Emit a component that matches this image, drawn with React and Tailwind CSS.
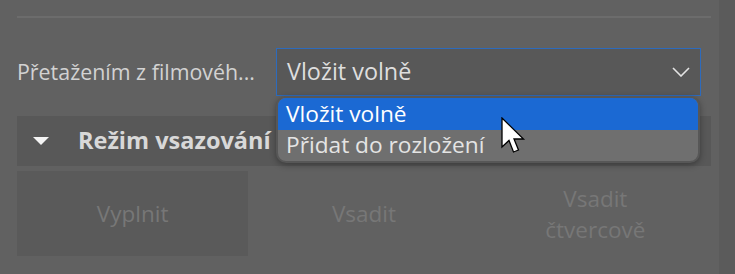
import React from 'react';

const font = { fontFamily: '"Open Sans", "Noto Sans", sans-serif' };

function Chevron() {
  return (
    <svg width="18" height="10" viewBox="0 0 18 10" fill="none">
      <path d="M1 1 L9 9 L17 1" stroke="#e4e4e4" strokeWidth="1.6" />
    </svg>
  );
}

function Cursor() {
  return (
    <svg width="28" height="40" viewBox="0 0 28 40">
      <path
        d="M1 1 L1 30 L8 23.5 L12.5 35 L17.5 33 L13 22 L22.5 22 Z"
        fill="#ffffff"
        stroke="#000000"
        strokeWidth="1.3"
        strokeLinejoin="miter"
      />
    </svg>
  );
}

function App() {
  return (
    <div className="relative flex h-[274px] w-[735px] overflow-hidden bg-[#616161]" style={font}>
      <div className="flex flex-1 flex-col pl-[17px] pr-[8px]">
        <div className="mt-[16px] h-[2px] bg-[#6c6c6c]" />

        <div className="mt-[30px] flex items-center pr-[10px]">
          <div className="w-[259px] text-[21.4px] leading-none text-[#d2d2d2]">Přetažením z filmovéh...</div>
          <div className="flex h-[48px] flex-1 items-center justify-between border border-[#2d6bbd] bg-[#585858] pl-[10px] pr-[10px]">
            <span className="text-[23.4px] text-[#dedede]">Vložit volně</span>
            <Chevron />
          </div>
        </div>

        <div className="mt-[20px] flex h-[50px] items-center bg-[#585858]">
          <svg className="ml-[16px]" width="16" height="8" viewBox="0 0 16 8">
            <path d="M0 0 L16 0 L8 8 Z" fill="#f4f4f4" />
          </svg>
          <span className="ml-[29px] text-[23.5px] font-bold text-[#d8d8d8]">Režim vsazování</span>
        </div>

        <div className="mt-[5px] grid h-[85px] grid-cols-3">
          <div className="flex items-center justify-center bg-[#5a5a5a] text-[22.5px] text-[#777777]">Vyplnit</div>
          <div className="flex items-center justify-center text-[22.5px] text-[#777777]">Vsadit</div>
          <div className="flex flex-col items-center justify-center text-center text-[22.5px] leading-[31px] text-[#777777]">
            <span>Vsadit</span>
            <span>čtvercově</span>
          </div>
        </div>
      </div>
      <div className="w-[16px] bg-[#5b5b5b]" />

      <div className="absolute left-[276px] top-[96px] w-[424px] overflow-hidden rounded-[10px] border-2 border-[#575757] bg-[#6f6f6f] shadow-[0_2px_6px_rgba(0,0,0,0.35)]">
        <div className="flex h-[32px] items-center bg-[#1b69d3] pl-[8px] text-[22.7px] text-white">Vložit volně</div>
        <div className="flex h-[31px] items-center pl-[8px] text-[22.7px] text-[#e4e4e4]">Přidat do rozložení</div>
      </div>

      <div className="absolute left-[501px] top-[117px]">
        <Cursor />
      </div>
    </div>
  );
}

export default App;
